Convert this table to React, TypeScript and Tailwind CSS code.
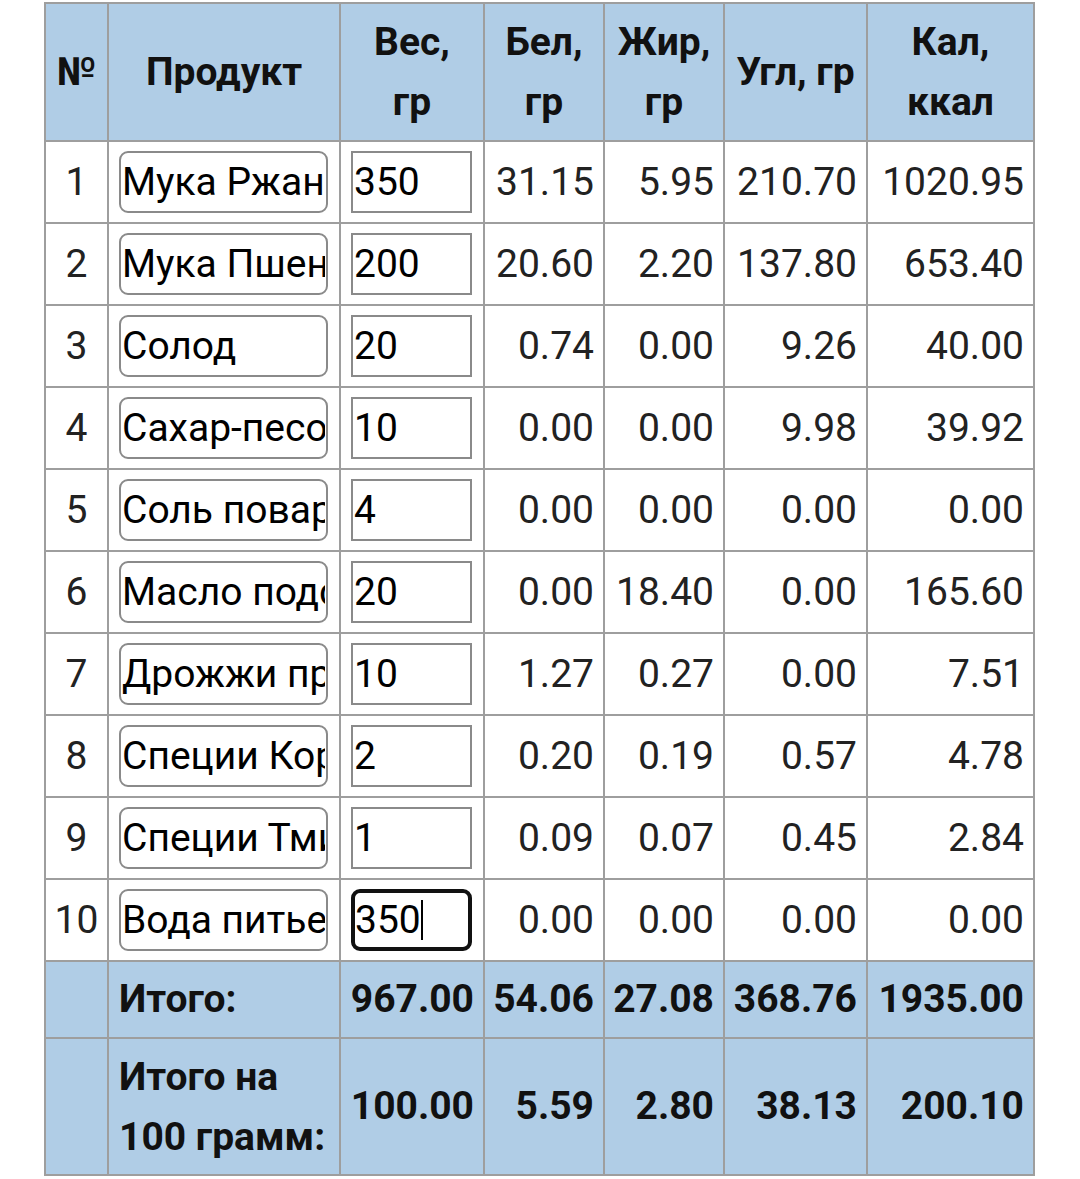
const ROWS: { n: number; name: string; w: string; b: string; f: string; u: string; k: string }[] = [
  { n: 1, name: 'Мука Ржаная', w: '350', b: '31.15', f: '5.95', u: '210.70', k: '1020.95' },
  { n: 2, name: 'Мука Пшеничная', w: '200', b: '20.60', f: '2.20', u: '137.80', k: '653.40' },
  { n: 3, name: 'Солод', w: '20', b: '0.74', f: '0.00', u: '9.26', k: '40.00' },
  { n: 4, name: 'Сахар-песок', w: '10', b: '0.00', f: '0.00', u: '9.98', k: '39.92' },
  { n: 5, name: 'Соль поваренная', w: '4', b: '0.00', f: '0.00', u: '0.00', k: '0.00' },
  { n: 6, name: 'Масло подсолнечное', w: '20', b: '0.00', f: '18.40', u: '0.00', k: '165.60' },
  { n: 7, name: 'Дрожжи прессованные', w: '10', b: '1.27', f: '0.27', u: '0.00', k: '7.51' },
  { n: 8, name: 'Специи Кориандр', w: '2', b: '0.20', f: '0.19', u: '0.57', k: '4.78' },
  { n: 9, name: 'Специи Тмин', w: '1', b: '0.09', f: '0.07', u: '0.45', k: '2.84' },
];

const cell = 'border-2 border-[#9e9e9e]';
const num = `${cell} text-right pr-[9px] pl-0`;
const head = `${cell} bg-[#b0cde6] font-bold text-center leading-[60px] text-[#111]`;
const field = 'block w-full h-[62px] border-2 border-[#8a8a8a] px-[1px] text-[39px] text-black bg-white outline-none';

export default function App() {
  return (
    <div className="min-h-screen bg-white pl-[44px] pt-[2px]" style={{ fontFamily: 'Roboto, "Noto Sans", sans-serif' }}>
      <table className="table-fixed border-collapse w-[989px] text-[39px] text-[#222]">
        <colgroup>
          <col className="w-[63px]" />
          <col className="w-[232px]" />
          <col className="w-[144px]" />
          <col className="w-[120px]" />
          <col className="w-[120px]" />
          <col className="w-[143px]" />
          <col className="w-[167px]" />
        </colgroup>
        <thead>
          <tr className="h-[138px]">
            <th className={head}>№</th>
            <th className={head}>Продукт</th>
            <th className={head}>Вес,<br />гр</th>
            <th className={head}>Бел,<br />гр</th>
            <th className={head}>Жир,<br />гр</th>
            <th className={head}>Угл, гр</th>
            <th className={head}>Кал,<br />ккал</th>
          </tr>
        </thead>
        <tbody>
          {ROWS.map((r) => (
            <tr key={r.n} className="h-[82px]">
              <td className={`${cell} text-center p-0`}>{r.n}</td>
              <td className={`${cell} pl-[10px] pr-[11px] py-0`}>
                <input readOnly value={r.name} className={`${field} rounded-[9px]`} />
              </td>
              <td className={`${cell} pl-[10px] pr-[11px] py-0`}>
                <input readOnly value={r.w} className={field} />
              </td>
              <td className={num}>{r.b}</td>
              <td className={num}>{r.f}</td>
              <td className={num}>{r.u}</td>
              <td className={num}>{r.k}</td>
            </tr>
          ))}
          <tr className="h-[82px]">
            <td className={`${cell} text-center p-0`}>10</td>
            <td className={`${cell} pl-[10px] pr-[11px] py-0`}>
              <input readOnly value="Вода питьевая" className={`${field} rounded-[9px]`} />
            </td>
            <td className={`${cell} pl-[10px] pr-[11px] py-0`}>
              <div className="flex items-center h-[62px] border-[4px] border-[#111] rounded-[9px] text-[39px] text-black">
                <span>350</span>
                <span className="w-[2px] h-[40px] bg-black" />
              </div>
            </td>
            <td className={num}>0.00</td>
            <td className={num}>0.00</td>
            <td className={num}>0.00</td>
            <td className={num}>0.00</td>
          </tr>
          <tr className="h-[77px] bg-[#b0cde6] font-bold text-[#111]">
            <td className={cell}></td>
            <td className={`${cell} pl-[10px]`}>Итого:</td>
            <td className={num}>967.00</td>
            <td className={num}>54.06</td>
            <td className={num}>27.08</td>
            <td className={num}>368.76</td>
            <td className={num}>1935.00</td>
          </tr>
          <tr className="h-[137px] bg-[#b0cde6] font-bold text-[#111]">
            <td className={cell}></td>
            <td className={`${cell} pl-[10px] leading-[60px]`}>Итого на<br />100 грамм:</td>
            <td className={num}>100.00</td>
            <td className={num}>5.59</td>
            <td className={num}>2.80</td>
            <td className={num}>38.13</td>
            <td className={num}>200.10</td>
          </tr>
        </tbody>
      </table>
    </div>
  );
}
